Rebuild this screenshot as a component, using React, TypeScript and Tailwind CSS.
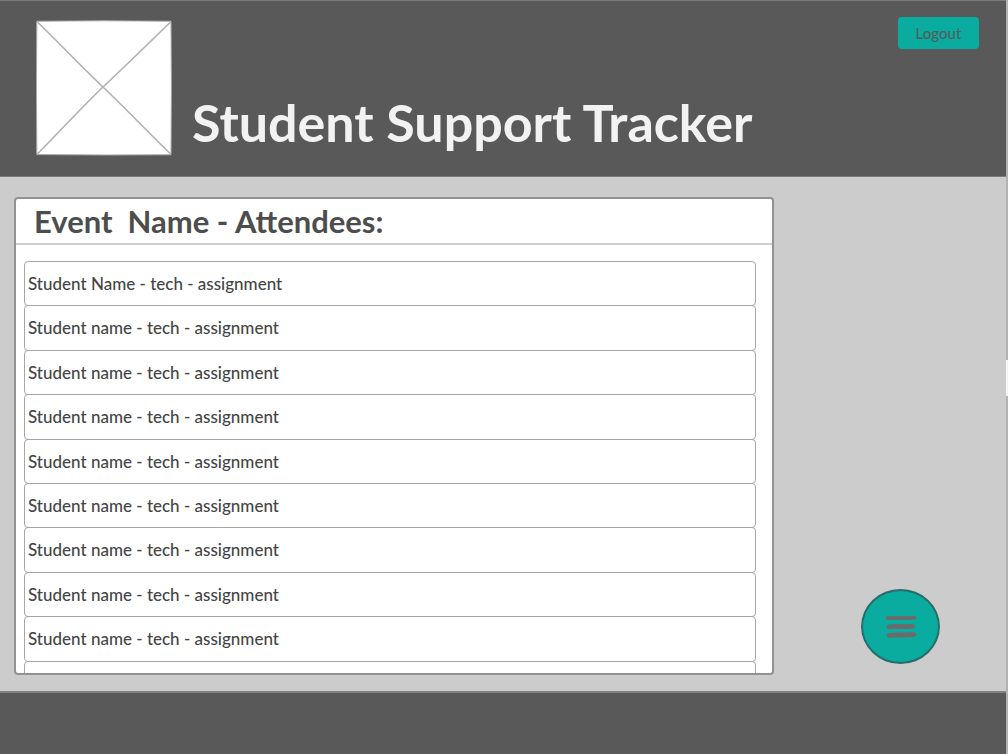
const attendees = [
  'Student Name - tech - assignment',
  'Student name - tech - assignment',
  'Student name - tech - assignment',
  'Student name - tech - assignment',
  'Student name - tech - assignment',
  'Student name - tech - assignment',
  'Student name - tech - assignment',
  'Student name - tech - assignment',
  'Student name - tech - assignment',
  '',
];

function LogoPlaceholder() {
  return (
    <svg className="size-[136px] shrink-0" viewBox="0 0 136 136" fill="none" aria-label="Logo" role="img">
      <path d="M.8 1.200 68 .8l67 .4.4 67-.4 66.600L68 135 .8 134.600.5 68Z" fill="#fff" stroke="#a8a8a8" />
      <path d="M1 1.500 C25 25 50 51 67 67 S112 112 135 134.500" stroke="#b0b0b0" strokeWidth="1.600" />
      <path d="M135 1.500 C111 25 84 51 67 67 S23 112 1 134.500" stroke="#b0b0b0" strokeWidth="1.600" />
    </svg>
  );
}

function MenuIcon() {
  return (
    <svg className="h-6 w-8" viewBox="0 0 32 24" fill="none" stroke="#6b6b6b" strokeLinecap="round" aria-hidden="true">
      <path d="M2.500 3.200 10 2.900 20 3 29.500 2.700" strokeWidth="3.800" />
      <path d="M4 11.800 11 11.500 20 11.600 27.500 11.300" strokeWidth="4.800" />
      <path d="M4 20.400 12 20 20 20 29 19.600" strokeWidth="4.800" />
    </svg>
  );
}

function Header() {
  return (
    <header className="flex items-start border-y border-[#7a7a7a] bg-[#595959] pt-[19px] pr-[27px] pb-5 pl-9">
      <LogoPlaceholder />
      <h1 className="mt-[72px] ml-5 flex-1 text-[52px] leading-[60px] font-bold whitespace-nowrap text-[#f2f2f2]">
        Student Support Tracker
      </h1>
      <button type="button" className="-mt-[3px] h-8 w-[81px] shrink-0 rounded bg-[#0aaca0] text-[15px] font-medium text-[#4f5f5e]">
        Logout
      </button>
    </header>
  );
}

function AttendeePanel() {
  return (
    <section className="flex min-w-0 flex-1 flex-col overflow-hidden rounded border-2 border-[#929292] bg-white">
      <h2 className="shrink-0 border-b-2 border-[#cdcdcd] pl-[18px] text-[31px] leading-[44px] font-bold whitespace-pre text-[#4d4d4d]">
        Event  Name - Attendees:
      </h2>
      <div className="min-h-0 flex-1 overflow-y-auto pt-4 pr-4 pl-2 [scrollbar-width:none]">
        <ul className="grid h-[444px] auto-rows-fr">
          {attendees.map((attendee, index) => (
            <li
              key={index}
              className="-mb-px flex items-center rounded border border-[#a6a6a6] pl-[3px] text-[17px] font-medium text-[#454545]"
            >
              {attendee}
            </li>
          ))}
        </ul>
      </div>
    </section>
  );
}

export default function App() {
  return (
    <div className="relative flex h-screen flex-col border-r-2 border-[#b3b3b3] bg-[#cccccc] font-['Lato','Open_Sans',sans-serif]">
      <Header />
      <main className="flex min-h-0 flex-1 pt-5 pb-4 pl-3.5">
        <AttendeePanel />
        <aside className="flex w-[232px] shrink-0 items-end justify-end pr-[66px] pb-[11px]">
          <button
            type="button"
            aria-label="Open menu"
            className="flex h-[75px] w-[79px] items-center justify-center rounded-[50%] border-2 border-[#266e69] bg-[#0aaca0]"
          >
            <MenuIcon />
          </button>
        </aside>
      </main>
      <footer className="h-[63px] shrink-0 border-t-2 border-[#828282] bg-[#595959]" />
      <div className="absolute top-[360px] -right-0.5 h-9 w-0.5 bg-[#f5f5f5]" />
    </div>
  );
}
